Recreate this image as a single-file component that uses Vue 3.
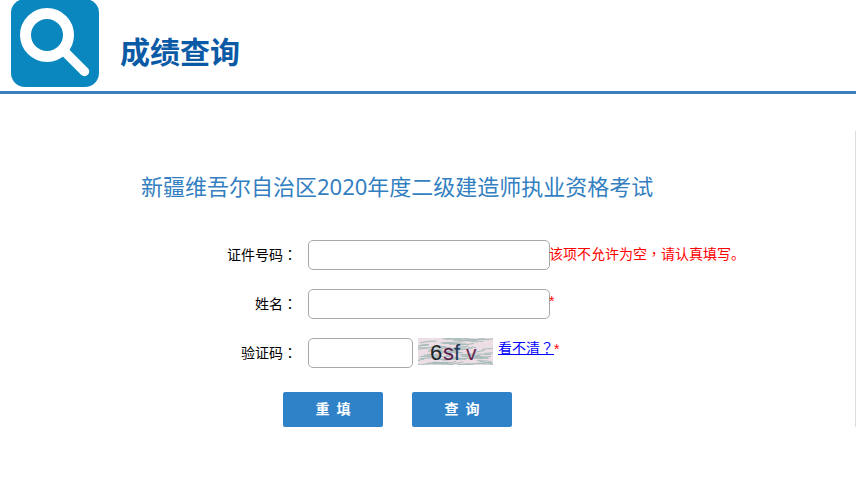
<template>
  <div class="page">
    <header class="top">
      <svg class="logo" width="88" height="88" viewBox="0 0 88 88">
        <rect width="88" height="88" y="-1" rx="14" fill="#0b87bf" />
        <circle cx="36" cy="35" r="21.5" fill="none" stroke="#fff" stroke-width="11" />
        <path d="M54 52 L73.5 71.5" stroke="#fff" stroke-width="9.5" stroke-linecap="round" />
      </svg>
      <h1>成绩查询</h1>
    </header>

    <main class="panel">
      <h2>新疆维吾尔自治区2020年度二级建造师执业资格考试</h2>

      <form class="form" @submit.prevent>
        <div class="row">
          <label>证件号码<span class="tc">：</span></label>
          <input class="field" type="text" />
          <span class="err first">该项不允许为空<span class="tc">，</span>请认真填写。</span>
        </div>
        <div class="row">
          <label>姓名<span class="tc">：</span></label>
          <input class="field" type="text" />
          <span class="err star">*</span>
        </div>
        <div class="row">
          <label>验证码<span class="tc">：</span></label>
          <input class="field short" type="text" />
          <svg class="captcha" width="75" height="27" viewBox="0 0 75 27">
            <rect width="75" height="27" fill="#eddde4" />
            <path v-for="(d, i) in noise" :key="i" :d="d" stroke="#a5bcba" stroke-width="1" fill="none" />
            <text x="12" y="22" font-size="22" fill="#1d2328" class="cap">6</text>
            <text x="25" y="22" font-size="22" fill="#561b49" class="cap">s</text>
            <text x="36" y="22" font-size="22" fill="#27395a" class="cap">f</text>
            <text x="48" y="22" font-size="21" fill="#652a53" class="cap">v</text>
          </svg>
          <a class="more" href="#">看不清<span class="tc">？</span></a>
          <span class="err star2">*</span>
        </div>
        <div class="btns">
          <button type="button">重 填</button>
          <button type="button">查 询</button>
        </div>
      </form>
    </main>
  </div>
</template>

<script setup>
// captcha background scratches, seeded so the picture stays the same
let seed = 17
const rnd = (n) => {
  seed = (seed * 9301 + 49297) % 233280
  return (seed / 233280) * n
}
const noise = []
for (let i = 0; i < 85; i++) {
  const x = rnd(72) - 4
  const y = rnd(28)
  noise.push(`M${x.toFixed(1)} ${y.toFixed(1)} l${(4 + rnd(8)).toFixed(1)} ${(rnd(3) - 1.5).toFixed(1)} l${(3 + rnd(6)).toFixed(1)} ${(rnd(3) - 1.5).toFixed(1)}`)
}
</script>

<style>
html, body {
  background: #fff;
  overflow: hidden;
}
</style>

<style scoped>
.page {
  font-family: "Liberation Sans", "Noto Sans CJK SC", sans-serif;
  font-size: 14px;
  color: #000;
}

.tc {
  font-family: "Noto Sans CJK TC", sans-serif;
}

.top {
  display: flex;
  align-items: flex-start;
  height: 91px;
  padding-left: 11px;
  border-bottom: 3px solid #3a7fbc;
}

.logo {
  display: block;
  flex: none;
}

.top h1 {
  margin: 34px 0 0 21px;
  font-size: 30px;
  line-height: 38px;
  font-weight: 700;
  color: #0b5aa5;
}

.panel {
  margin-top: 37px;
  height: 296px;
  border-right: 1px solid #ddd;
}

.panel h2 {
  margin: 0;
  padding: 39px 0 1px 141px;
  font-family: "Noto Sans", "Noto Sans CJK SC", sans-serif;
  font-size: 22px;
  line-height: 32px;
  font-weight: 400;
  color: #337fc1;
}

.form {
  margin-top: 37px;
}

.row {
  display: flex;
  align-items: flex-start;
  height: 30px;
  margin-bottom: 19px;
}

.row label {
  width: 297px;
  text-align: right;
  line-height: 28px;
  margin-right: 11px;
  flex: none;
}

.field {
  box-sizing: border-box;
  width: 242px;
  height: 30px;
  padding: 0 6px;
  border: 1px solid #a9a9a9;
  border-radius: 5px;
  background: #fff;
  outline: none;
  flex: none;
}

.field.short {
  width: 105px;
}

.err {
  color: #f00;
  font-size: 14px;
}

.first {
  line-height: 26px;
  margin-left: -1px;
}

.star {
  line-height: 24px;
  margin-left: -1px;
}

.captcha {
  display: block;
  margin-left: 5px;
  flex: none;
}

.cap {
  font-family: "Liberation Sans", sans-serif;
}

.more {
  margin-left: 5px;
  line-height: 18px;
  color: #00f;
  text-decoration: underline;
}

.star2 {
  line-height: 22px;
}

.btns {
  display: flex;
  gap: 29px;
  padding-left: 283px;
  margin-top: 24px;
}

.btns button {
  width: 100px;
  height: 35px;
  padding: 0 0 3px;
  border: none;
  border-radius: 2px;
  background: #3082c8;
  color: #fff;
  font-family: inherit;
  font-size: 14px;
  font-weight: 700;
  word-spacing: 3px;
  cursor: pointer;
}
</style>
